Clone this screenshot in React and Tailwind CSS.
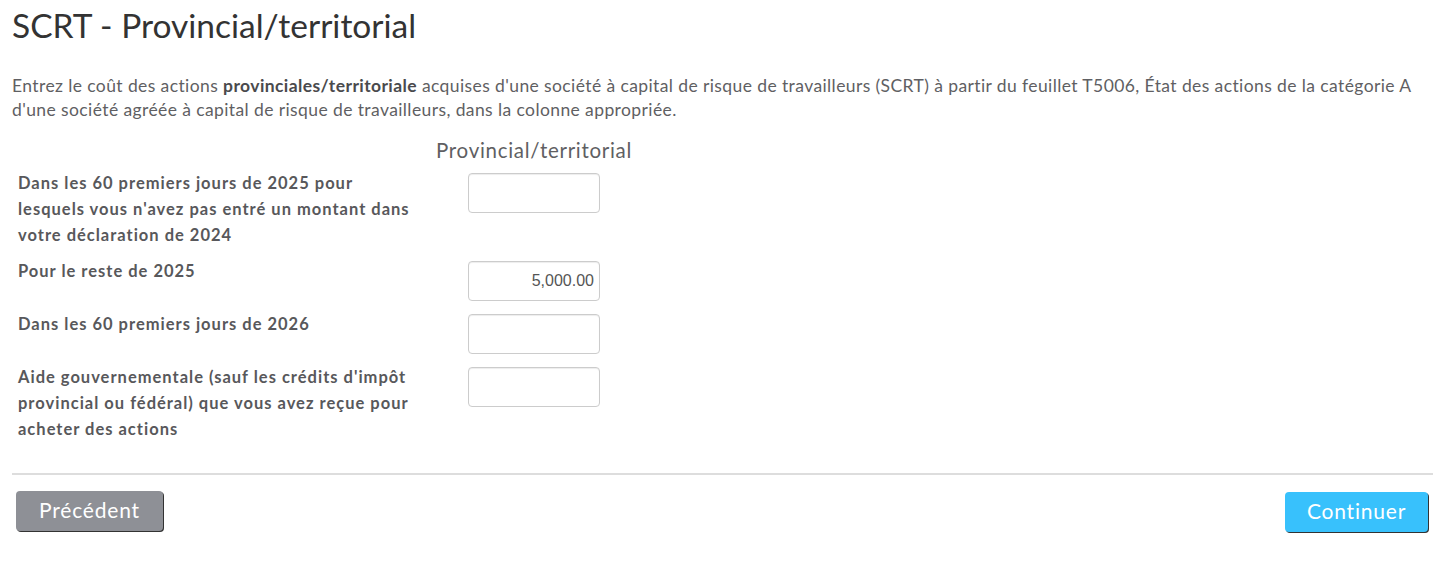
import React from "react";

const rows = [
  {
    label:
      "Dans les 60 premiers jours de 2025 pour lesquels vous n'avez pas entré un montant dans votre déclaration de 2024",
    value: "",
  },
  { label: "Pour le reste de 2025", value: "5,000.00" },
  { label: "Dans les 60 premiers jours de 2026", value: "" },
  {
    label:
      "Aide gouvernementale (sauf les crédits d'impôt provincial ou fédéral) que vous avez reçue pour acheter des actions",
    value: "",
  },
];

export default function App() {
  return (
    <div
      className="w-[1437px] h-[562px] bg-white pl-3 pr-1 pt-[4px]"
      style={{ fontFamily: "Lato, 'Open Sans', sans-serif" }}
    >
      <h1 className="text-[33.5px] leading-[42px] text-[#333333] font-normal">
        SCRT - Provincial/territorial
      </h1>
      <p className="mt-[28px] pr-[12px] text-[17.5px] leading-[24px] tracking-[0.4px] text-[#5f5f63]">
        Entrez le coût des actions{" "}
        <span className="font-bold text-[#4a4a4d]">provinciales/territoriale</span>{" "}
        acquises d'une société à capital de risque de travailleurs (SCRT) à partir du feuillet
        T5006, État des actions de la catégorie A d'une société agréée à capital de risque de
        travailleurs, dans la colonne appropriée.
      </p>
      <div className="mt-[16px] flex">
        <div className="w-[424px]" />
        <div className="w-[196px] text-center text-[20.5px] leading-[24px] tracking-[0.7px] text-[#5f5f63] whitespace-nowrap">
          Provincial/territorial
        </div>
      </div>
      <div className="mt-[8px] flex flex-col gap-[10px]">
        {rows.map((r, i) => (
          <div key={i} className="flex items-start">
            <div className="w-[424px] pl-[6px] pr-[22px] text-[16.5px] leading-[26px] tracking-[1px] font-bold text-[#58585b]">
              {r.label}
            </div>
            <div className="w-[196px] flex justify-center">
              <input
                type="text"
                defaultValue={r.value}
                className="mt-[3px] w-[132px] h-[40px] rounded-[4px] border border-[#cccccc] bg-white pl-[6px] pr-[5px] text-right text-[16px] text-[#555555] shadow-[inset_0_1px_1px_rgba(0,0,0,0.075)] outline-none"
                style={{ fontFamily: "'Liberation Sans', Arial, sans-serif" }}
              />
            </div>
          </div>
        ))}
      </div>
      <div className="mt-[31px] h-[2px] bg-[#dddddd]" />
      <div className="mt-[16px] flex justify-between pl-[4px] pr-[5px]">
        <button className="w-[147px] h-[40px] rounded-[4px] bg-[#8e9096] text-white text-[21px] leading-none tracking-[0.8px] pb-[4px] shadow-[1px_1px_0_#333]">
          Précédent
        </button>
        <button className="mt-[1px] w-[143px] h-[40px] rounded-[4px] bg-[#38c1fc] text-white text-[21px] leading-none tracking-[0.8px] pb-[3px] shadow-[1px_1px_0_#333]">
          Continuer
        </button>
      </div>
    </div>
  );
}
